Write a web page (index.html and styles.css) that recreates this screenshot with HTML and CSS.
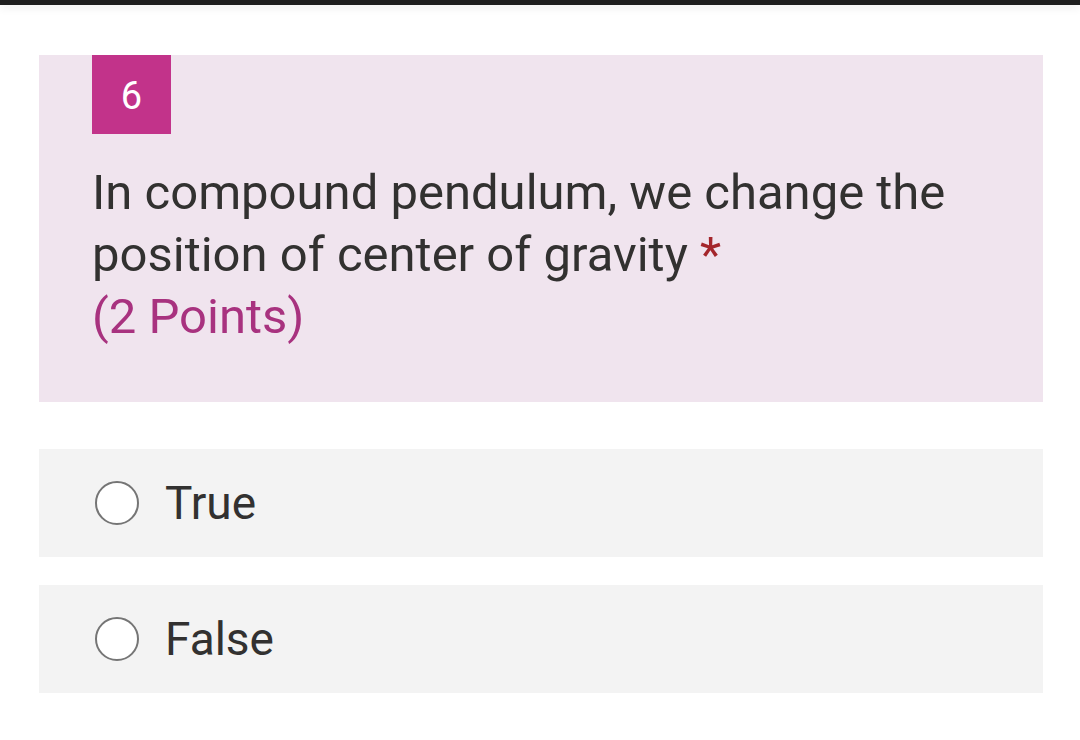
FILE: index.html
```html
<!DOCTYPE html>
<html>
<head>
<meta charset="utf-8">
<link rel="stylesheet" href="styles.css">
</head>
<body>
<div class="topbar"></div>
<main class="form">
  <section class="question">
    <div class="badge">6</div>
    <div class="qtext">In compound pendulum, we change the position of center of gravity <span class="req">*</span></div>
    <div class="points">(2 Points)</div>
  </section>
  <div class="options">
    <label class="option"><span class="radio"></span><span class="olabel">True</span></label>
    <label class="option"><span class="radio"></span><span class="olabel">False</span></label>
  </div>
</main>
</body>
</html>
```
FILE: styles.css
```css
html, body {
  margin: 0;
  padding: 0;
  background: #ffffff;
  font-family: Roboto, "Liberation Sans", sans-serif;
}
.topbar {
  height: 5px;
  background: #1e1e1e;
  box-shadow: 0 3px 8px rgba(0,0,0,0.08);
}
.form {
  padding: 50px 37px 0 39px;
}
.question {
  background: #f0e4ee;
  padding: 0 53px 0 53px;
  height: 347px;
  box-sizing: border-box;
}
.badge {
  width: 79px;
  height: 79px;
  box-sizing: border-box;
  padding-top: 3px;
  background: #c2338a;
  color: #ffffff;
  font-size: 38px;
  display: flex;
  align-items: center;
  justify-content: center;
}
.qtext {
  margin-top: 28px;
  font-size: 49px;
  line-height: 62px;
  color: #323130;
}
.req {
  color: #a4262c;
}
.points {
  font-size: 49px;
  line-height: 62px;
  color: #a8327f;
}
.options {
  margin-top: 47px;
  display: flex;
  flex-direction: column;
  gap: 28px;
}
.option {
  background: #f3f3f3;
  height: 108px;
  display: flex;
  align-items: center;
  padding-left: 56px;
}
.radio {
  width: 40px;
  height: 40px;
  border: 2px solid #757575;
  border-radius: 50%;
  background: #ffffff;
  flex: none;
}
.olabel {
  margin-left: 26px;
  font-size: 46px;
  color: #323130;
}
```
